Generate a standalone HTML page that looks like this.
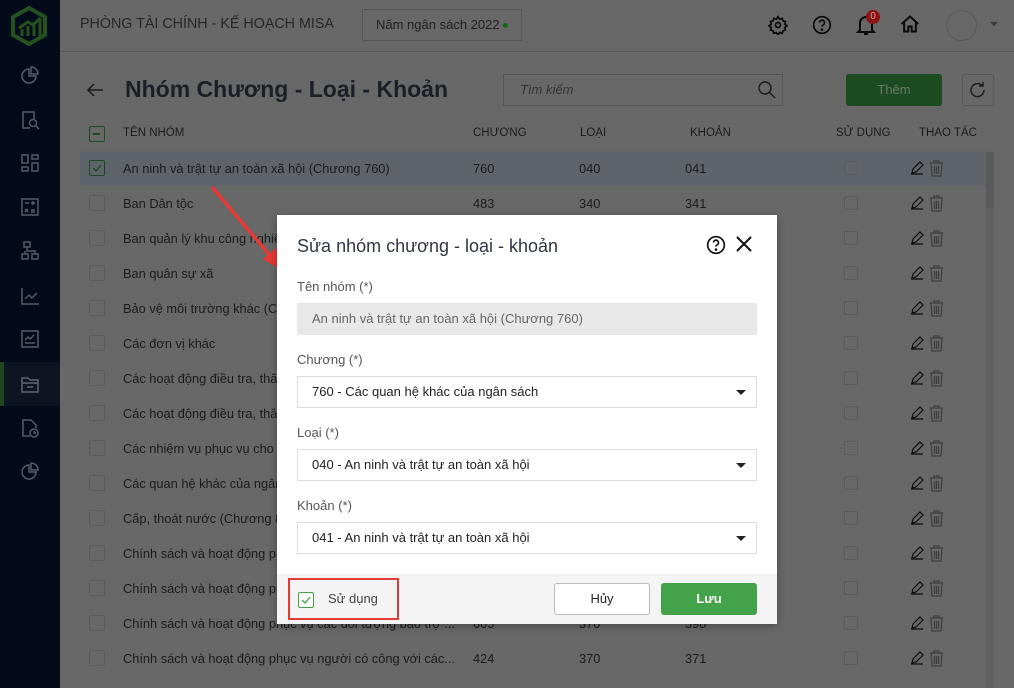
<!DOCTYPE html>
<html><head><meta charset="utf-8"><style>
*{box-sizing:border-box;margin:0;padding:0}
body{width:1014px;height:688px;overflow:hidden;background:#686868;font-family:"Liberation Sans",Roboto,sans-serif;position:relative;color:#1c1c1c}
.a{position:absolute}
.side{left:0;top:0;width:60px;height:688px;background:#030a19}
.si{position:absolute;left:20px;width:20px;height:20px}
.hdr{left:60px;top:0;right:0;height:52px;border-bottom:1px solid #5a5a5a}
.row{position:absolute;left:80px;width:906px;height:35px;font-size:12.8px;line-height:35px}
.row span{position:absolute;top:0;white-space:nowrap}
.cb{position:absolute;width:16px;height:16px;border:1px solid #5c5c5c;border-radius:2px}
.th{position:absolute;top:127px;font-size:11.5px;color:#1c1c1c}
.dlg{left:277px;top:215px;width:500px;height:409px;background:#fff;box-shadow:0 2px 8px rgba(0,0,0,.3)}
.lbl{position:absolute;left:20px;font-size:13px;color:#555}
.inp{position:absolute;left:20px;width:460px;height:32px;border:1px solid #dcdcdc;font-size:13px;line-height:30px;padding-left:14px;color:#222}
.car{position:absolute;right:10px;top:13px;border-left:5px solid transparent;border-right:5px solid transparent;border-top:5px solid #222}
</style></head><body>
<div class="a side">
<svg class="a" style="left:10px;top:6px" width="38" height="40" viewBox="0 0 38 40"><path d="M19 2 L35 11 V29 L19 38 L3 29 V11 Z" fill="none" stroke="#245120" stroke-width="4"/><path d="M12 30V23M18 30V20M24 30V16M30 30V12M9 22L18 16L23 19L30 12" stroke="#245120" stroke-width="3" fill="none"/></svg>
<div class="a" style="left:0;top:362px;width:60px;height:44px;background:#0e1522;border-left:4px solid #20461e"></div>
<svg class="si" style="top:66px" viewBox="0 0 20 20" fill="none" stroke="#555b66" stroke-width="1.5"><path d="M9 3a7 7 0 1 0 7 7H9z"/><path d="M11 1v7h7a7 7 0 0 0-7-7z"/></svg>
<svg class="si" style="top:110px" viewBox="0 0 20 20" fill="none" stroke="#555b66" stroke-width="1.5"><path d="M10 18H3V2h11v7"/><circle cx="13" cy="13" r="3.5"/><path d="M15.5 15.5L19 19"/></svg>
<svg class="si" style="top:153px" viewBox="0 0 20 20" fill="none" stroke="#555b66" stroke-width="1.5"><rect x="2" y="2" width="6" height="8"/><rect x="12" y="2" width="6" height="4"/><rect x="2" y="14" width="6" height="4"/><rect x="12" y="10" width="6" height="8"/></svg>
<svg class="si" style="top:197px" viewBox="0 0 20 20" fill="none" stroke="#555b66" stroke-width="1.5"><rect x="2" y="2" width="16" height="16"/><path d="M5 6h4M13 4v4M11 6h4M5 12l3 3M8 12l-3 3M11 13h4M11 15h4"/></svg>
<svg class="si" style="top:241px" viewBox="0 0 20 20" fill="none" stroke="#555b66" stroke-width="1.5"><rect x="4" y="1" width="6" height="5"/><rect x="2" y="13" width="6" height="5"/><rect x="12" y="13" width="6" height="5"/><path d="M7 6v4h8v3M5 10v3"/></svg>
<svg class="si" style="top:286px" viewBox="0 0 20 20" fill="none" stroke="#555b66" stroke-width="1.5"><path d="M2 2v16h17M5 13l4-4 3 3 5-5"/></svg>
<svg class="si" style="top:329px" viewBox="0 0 20 20" fill="none" stroke="#555b66" stroke-width="1.5"><rect x="2" y="2" width="16" height="16"/><path d="M5 11l3-3 2 2 4-4M5 14h10"/></svg>
<svg class="si" style="top:374px" viewBox="0 0 20 20" fill="none" stroke="#5e6470" stroke-width="1.5"><path d="M2 4h6l2 2h8v12H2z"/><path d="M2 9h16M7 13h6"/></svg>
<svg class="si" style="top:418px" viewBox="0 0 20 20" fill="none" stroke="#555b66" stroke-width="1.5"><path d="M10 18H3V2h8l5 5v3"/><circle cx="14" cy="15" r="4"/><path d="M14 13v2h2"/></svg>
<svg class="si" style="top:462px" viewBox="0 0 20 20" fill="none" stroke="#555b66" stroke-width="1.5"><path d="M9 3a7 7 0 1 0 7 7H9z"/><path d="M11 1v7h7a7 7 0 0 0-7-7z"/></svg>
</div>
<div class="a hdr">
<div class="a" style="left:20px;top:16px;font-size:14.3px;color:#272727">PHÒNG TÀI CHÍNH - KẾ HOẠCH MISA</div>
<div class="a" style="left:302px;top:9px;width:160px;height:32px;border:1px solid #555;font-size:13px;line-height:30px;padding-left:13px;color:#222">Năm ngân sách 2022 <span style="display:inline-block;width:5px;height:5px;border-radius:50%;background:#136a17;vertical-align:middle"></span></div>
<svg class="a" style="left:708px;top:15px" width="20" height="20" viewBox="0 0 24 24" fill="none" stroke="#0a0a0a" stroke-width="2"><circle cx="12" cy="12" r="3"/><path d="M12 2l2 3 3-1 1 3 3 1-1 3 3 2-3 2 1 3-3 1-1 3-3-1-2 3-2-3-3 1-1-3-3-1 1-3-3-2 3-2-1-3 3-1 1-3 3 1z"/></svg>
<svg class="a" style="left:752px;top:15px" width="20" height="20" viewBox="0 0 24 24" fill="none" stroke="#0a0a0a" stroke-width="2"><circle cx="12" cy="12" r="10"/><path d="M9 9a3 3 0 1 1 4 3c-1 .5-1 1-1 2"/><circle cx="12" cy="17.5" r=".6" fill="#0a0a0a"/></svg>
<svg class="a" style="left:796px;top:14px" width="20" height="22" viewBox="0 0 20 22" fill="none" stroke="#0a0a0a" stroke-width="2"><path d="M4 16V9a6 6 0 0 1 12 0v7l2 2H2z"/><path d="M8 20h4"/></svg>
<div class="a" style="left:806px;top:10px;width:14px;height:14px;border-radius:50%;background:#8b1515;color:#d99;font-size:10px;text-align:center;line-height:14px">0</div>
<svg class="a" style="left:840px;top:14px" width="20" height="20" viewBox="0 0 24 24" fill="none" stroke="#0a0a0a" stroke-width="2.4"><path d="M2 12L12 3l10 9M5 10v11h5v-6h4v6h5V10"/></svg>
<div class="a" style="left:886px;top:10px;width:31px;height:31px;border-radius:50%;border:1px solid #5a5a5a"></div>
<div class="a" style="left:930px;top:22px;border-left:4px solid transparent;border-right:4px solid transparent;border-top:4px solid #3a3a3a"></div>
</div>
<svg class="a" style="left:86px;top:82px" width="18" height="16" viewBox="0 0 18 16" fill="none" stroke="#1a1a1a" stroke-width="1.5"><path d="M17 8H2M8 2L2 8l6 6"/></svg>
<div class="a" style="left:125px;top:76px;font-size:23px;font-weight:bold;color:#1a1f28">Nhóm Chương - Loại - Khoản</div>
<div class="a" style="left:503px;top:74px;width:280px;height:32px;border:1px solid #555;font-size:13px;font-style:italic;line-height:30px;padding-left:16px;color:#333">Tìm kiếm</div>
<svg class="a" style="left:757px;top:80px" width="20" height="20" viewBox="0 0 20 20" fill="none" stroke="#1a1a1a" stroke-width="1.4"><circle cx="8" cy="8" r="6"/><path d="M12.5 12.5L18 18"/></svg>
<div class="a" style="left:846px;top:74px;width:96px;height:32px;background:#1d4b20;border-radius:3px;color:#687a68;font-size:13px;text-align:center;line-height:32px">Thêm</div>
<div class="a" style="left:962px;top:74px;width:32px;height:32px;border:1px solid #585858;border-radius:3px"></div>
<svg class="a" style="left:968px;top:80px" width="20" height="20" viewBox="0 0 20 20" fill="none" stroke="#1a1a1a" stroke-width="1.4"><path d="M16 10a6.5 6.5 0 1 1-2-4.6"/><path d="M15 2v4h-4"/></svg>

<div class="cb" style="left:89px;top:126px;border-color:#1d4b20;border-width:1.5px"><div style="position:absolute;left:3px;top:6px;width:7px;height:1.5px;background:#1d4b20"></div></div>
<div class="th" style="left:123px">TÊN NHÓM</div>
<div class="th" style="left:473px">CHƯƠNG</div>
<div class="th" style="left:580px">LOẠI</div>
<div class="th" style="left:690px">KHOẢN</div>
<div class="th" style="left:836px">SỬ DỤNG</div>
<div class="th" style="left:919px">THAO TÁC</div>
<div class="a" style="left:80px;top:151px;width:906px;height:1px;background:#5a5a5a"></div>
<div class="a" style="left:986px;top:151px;width:8px;height:537px;background:#626262"></div>
<div class="a" style="left:986px;top:152px;width:8px;height:56px;background:#5a5a5a"></div>
<div id="rows"></div>

<svg class="a" style="left:0;top:0" width="1014" height="688"><path d="M212 187L272 258" stroke="#e53935" stroke-width="3.5"/><path d="M281 270L263 259L276 248Z" fill="#e53935"/></svg>

<div class="a dlg">
<div class="a" style="left:20px;top:21px;font-size:18px;color:#2f3645">Sửa nhóm chương - loại - khoản</div>
<svg class="a" style="left:429px;top:20px" width="20" height="20" viewBox="0 0 24 24" fill="none" stroke="#111" stroke-width="2"><circle cx="12" cy="12" r="10"/><path d="M9 9a3 3 0 1 1 4 3c-1 .5-1 1-1 2"/><circle cx="12" cy="17.5" r=".6" fill="#111"/></svg>
<svg class="a" style="left:459px;top:21px" width="16" height="16" viewBox="0 0 16 16" stroke="#111" stroke-width="2"><path d="M1 1L15 15M15 1L1 15"/></svg>
<div class="lbl" style="top:64px">Tên nhóm (*)</div>
<div class="inp" style="top:88px;background:#e8e8e8;border-color:#e8e8e8;color:#666">An ninh và trật tự an toàn xã hội (Chương 760)</div>
<div class="lbl" style="top:137px">Chương (*)</div>
<div class="inp" style="top:161px">760 - Các quan hệ khác của ngân sách<div class="car"></div></div>
<div class="lbl" style="top:210px">Loại (*)</div>
<div class="inp" style="top:234px">040 - An ninh và trật tự an toàn xã hội<div class="car"></div></div>
<div class="lbl" style="top:283px">Khoản (*)</div>
<div class="inp" style="top:307px">041 - An ninh và trật tự an toàn xã hội<div class="car"></div></div>
<div class="a" style="left:0;top:359px;width:500px;height:50px;background:#f4f4f4"></div>
<div class="a" style="left:11px;top:363px;width:111px;height:42px;border:2px solid #e53935"></div>
<div class="cb" style="left:21px;top:377px;border-color:#43a34b;background:#fff"><svg width="14" height="14" viewBox="0 0 14 14" style="position:absolute;left:0;top:0" fill="none" stroke="#43a34b" stroke-width="1.3"><path d="M3 7l3 3 5-6"/></svg></div>
<div class="a" style="left:51px;top:376px;font-size:13px;color:#444">Sử dụng</div>
<div class="a" style="left:277px;top:368px;width:96px;height:32px;border:1px solid #bbb;border-radius:3px;background:#fff;font-size:13px;text-align:center;line-height:30px;color:#222">Hủy</div>
<div class="a" style="left:384px;top:368px;width:96px;height:32px;border-radius:3px;background:#43a34b;font-size:13px;font-weight:bold;text-align:center;line-height:32px;color:#fff">Lưu</div>
</div>
<script>
var d=[["An ninh và trật tự an toàn xã hội (Chương 760)","760","040","041"],["Ban Dân tộc","483","340","341"],["Ban quản lý khu công nghiệp","","",""],["Ban quân sự xã","","",""],["Bảo vệ môi trường khác (Chương","","",""],["Các đơn vị khác","","",""],["Các hoạt động điều tra, thăm dò","","",""],["Các hoạt động điều tra, thăm dò","","",""],["Các nhiệm vụ phục vụ cho","","",""],["Các quan hệ khác của ngân sách","","",""],["Cấp, thoát nước (Chương 8","","",""],["Chính sách và hoạt động phục vụ","","",""],["Chính sách và hoạt động phục vụ","","",""],["Chính sách và hoạt động phục vụ các đối tượng bảo trợ ...","605","370","398"],["Chính sách và hoạt động phục vụ người có công với các...","424","370","371"]];
var h="";
var ed='<svg style="position:absolute;left:830px;top:10px" width="14" height="15" viewBox="0 0 14 15" fill="none" stroke="#0c0c0c" stroke-width="1.2"><path d="M1 13h12M2 12l1-4 7-7 3 3-7 7z"/></svg><svg style="position:absolute;left:849px;top:9px" width="15" height="17" viewBox="0 0 15 17" fill="none" stroke="#3e3e3e" stroke-width="1.2"><path d="M1 3h13M5 3V1h5v2M2 3l1 13h9l1-13M5.5 6v8M7.5 6v8M9.5 6v8"/></svg>';
d.forEach(function(r,i){var t=151+i*35;var sel=i==0;
h+='<div class="row" style="top:'+t+'px;'+(sel?'background:#5f646a':'')+'">'+
'<div class="cb" style="left:9px;top:9px;'+(sel?'border-color:#1d4b20':'')+'">'+(sel?'<svg width="14" height="14" viewBox="0 0 14 14" style="position:absolute;left:0;top:0" fill="none" stroke="#1d4b20" stroke-width="1.3"><path d="M3 7l3 3 5-6"/></svg>':'')+'</div>'+
'<span style="left:43px">'+r[0]+'</span><span style="left:393px">'+r[1]+'</span><span style="left:499px">'+r[2]+'</span><span style="left:605px">'+r[3]+'</span>'+
'<div class="cb" style="left:764px;top:10px;width:14px;height:14px"></div>'+ed+'</div>';});
document.getElementById("rows").innerHTML=h;
</script>
</body></html>
